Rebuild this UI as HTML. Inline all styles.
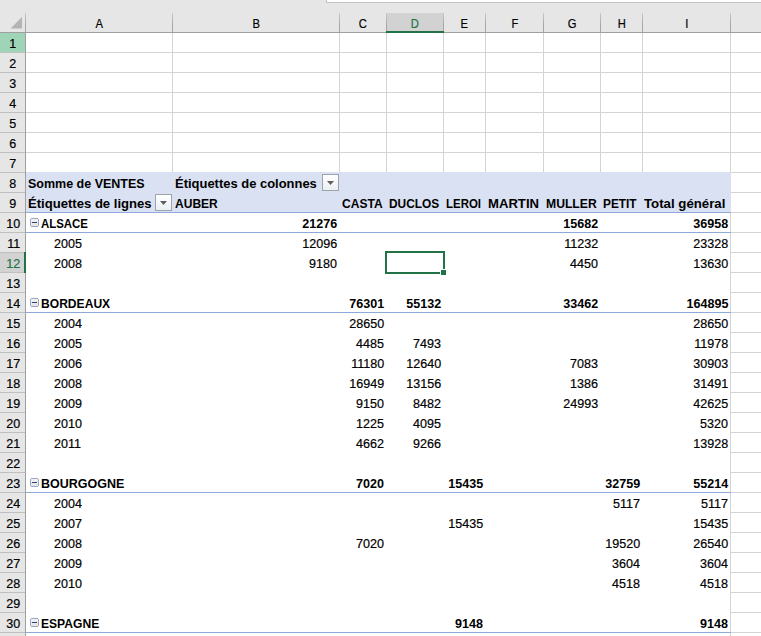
<!DOCTYPE html>
<html><head><meta charset="utf-8"><style>
html,body{margin:0;padding:0;}
body{width:761px;height:636px;position:relative;overflow:hidden;background:#fff;font-family:"Liberation Sans",sans-serif;font-size:13px;}
body>div,body>svg,body>span{position:absolute;box-sizing:content-box;}
.t{line-height:15px;white-space:pre;color:#000;-webkit-text-stroke:0.2px currentColor;}
.b{font-weight:bold;-webkit-text-stroke:0;}
</style></head><body>
<div style="left:0px;top:0px;width:761px;height:32px;background:#e6e6e6;"></div>
<div style="left:326px;top:0px;width:435px;height:3px;background:#c4c4c4;"></div>
<div style="left:327px;top:0px;width:434px;height:2px;background:#ffffff;"></div>
<svg style="left:0;top:0" width="26" height="32"><polygon points="22,17 22,28.5 10.5,28.5" fill="#b4b4b4"/></svg>
<div style="left:387px;top:13px;width:56px;height:18px;background:#d2d2d2;"></div>
<div style="left:25px;top:13px;width:1px;height:19px;background:linear-gradient(#c8c8c8,#a8a8a8 60%,#a4a4a4);"></div>
<div style="left:172px;top:13px;width:1px;height:19px;background:linear-gradient(#c8c8c8,#a8a8a8 60%,#a4a4a4);"></div>
<div style="left:339px;top:13px;width:1px;height:19px;background:linear-gradient(#c8c8c8,#a8a8a8 60%,#a4a4a4);"></div>
<div style="left:386px;top:13px;width:1px;height:19px;background:linear-gradient(#c8c8c8,#a8a8a8 60%,#a4a4a4);"></div>
<div style="left:443px;top:13px;width:1px;height:19px;background:linear-gradient(#c8c8c8,#a8a8a8 60%,#a4a4a4);"></div>
<div style="left:485px;top:13px;width:1px;height:19px;background:linear-gradient(#c8c8c8,#a8a8a8 60%,#a4a4a4);"></div>
<div style="left:543px;top:13px;width:1px;height:19px;background:linear-gradient(#c8c8c8,#a8a8a8 60%,#a4a4a4);"></div>
<div style="left:600px;top:13px;width:1px;height:19px;background:linear-gradient(#c8c8c8,#a8a8a8 60%,#a4a4a4);"></div>
<div style="left:642px;top:13px;width:1px;height:19px;background:linear-gradient(#c8c8c8,#a8a8a8 60%,#a4a4a4);"></div>
<div style="left:730px;top:13px;width:1px;height:19px;background:linear-gradient(#c8c8c8,#a8a8a8 60%,#a4a4a4);"></div>
<div style="left:0px;top:32px;width:761px;height:1px;background:#9f9f9f;"></div>
<div style="left:386px;top:31px;width:58px;height:2px;background:#217346;"></div>
<div style="left:0px;top:33px;width:25px;height:603px;background:#e6e6e6;"></div>
<div style="left:0px;top:33px;width:25px;height:19px;background:#9fd5b7;"></div>
<div style="left:0px;top:253px;width:24px;height:19px;background:#d2d2d2;"></div>
<div style="left:0px;top:52px;width:25px;height:1px;background:#bfbfbf;"></div>
<div style="left:0px;top:72px;width:25px;height:1px;background:#bfbfbf;"></div>
<div style="left:0px;top:92px;width:25px;height:1px;background:#bfbfbf;"></div>
<div style="left:0px;top:112px;width:25px;height:1px;background:#bfbfbf;"></div>
<div style="left:0px;top:132px;width:25px;height:1px;background:#bfbfbf;"></div>
<div style="left:0px;top:152px;width:25px;height:1px;background:#bfbfbf;"></div>
<div style="left:0px;top:172px;width:25px;height:1px;background:#bfbfbf;"></div>
<div style="left:0px;top:192px;width:25px;height:1px;background:#bfbfbf;"></div>
<div style="left:0px;top:212px;width:25px;height:1px;background:#bfbfbf;"></div>
<div style="left:0px;top:232px;width:25px;height:1px;background:#bfbfbf;"></div>
<div style="left:0px;top:252px;width:25px;height:1px;background:#bfbfbf;"></div>
<div style="left:0px;top:272px;width:25px;height:1px;background:#bfbfbf;"></div>
<div style="left:0px;top:292px;width:25px;height:1px;background:#bfbfbf;"></div>
<div style="left:0px;top:312px;width:25px;height:1px;background:#bfbfbf;"></div>
<div style="left:0px;top:332px;width:25px;height:1px;background:#bfbfbf;"></div>
<div style="left:0px;top:352px;width:25px;height:1px;background:#bfbfbf;"></div>
<div style="left:0px;top:372px;width:25px;height:1px;background:#bfbfbf;"></div>
<div style="left:0px;top:392px;width:25px;height:1px;background:#bfbfbf;"></div>
<div style="left:0px;top:412px;width:25px;height:1px;background:#bfbfbf;"></div>
<div style="left:0px;top:432px;width:25px;height:1px;background:#bfbfbf;"></div>
<div style="left:0px;top:452px;width:25px;height:1px;background:#bfbfbf;"></div>
<div style="left:0px;top:472px;width:25px;height:1px;background:#bfbfbf;"></div>
<div style="left:0px;top:492px;width:25px;height:1px;background:#bfbfbf;"></div>
<div style="left:0px;top:512px;width:25px;height:1px;background:#bfbfbf;"></div>
<div style="left:0px;top:532px;width:25px;height:1px;background:#bfbfbf;"></div>
<div style="left:0px;top:552px;width:25px;height:1px;background:#bfbfbf;"></div>
<div style="left:0px;top:572px;width:25px;height:1px;background:#bfbfbf;"></div>
<div style="left:0px;top:592px;width:25px;height:1px;background:#bfbfbf;"></div>
<div style="left:0px;top:612px;width:25px;height:1px;background:#bfbfbf;"></div>
<div style="left:0px;top:632px;width:25px;height:1px;background:#bfbfbf;"></div>
<div style="left:25px;top:32px;width:1px;height:604px;background:#9f9f9f;"></div>
<div style="left:24px;top:252px;width:2px;height:21px;background:#217346;"></div>
<div style="left:172px;top:33px;width:1px;height:139px;background:#d4d4d4;"></div>
<div style="left:339px;top:33px;width:1px;height:139px;background:#d4d4d4;"></div>
<div style="left:386px;top:33px;width:1px;height:139px;background:#d4d4d4;"></div>
<div style="left:443px;top:33px;width:1px;height:139px;background:#d4d4d4;"></div>
<div style="left:485px;top:33px;width:1px;height:139px;background:#d4d4d4;"></div>
<div style="left:543px;top:33px;width:1px;height:139px;background:#d4d4d4;"></div>
<div style="left:600px;top:33px;width:1px;height:139px;background:#d4d4d4;"></div>
<div style="left:642px;top:33px;width:1px;height:139px;background:#d4d4d4;"></div>
<div style="left:730px;top:33px;width:1px;height:139px;background:#d4d4d4;"></div>
<div style="left:26px;top:52px;width:735px;height:1px;background:#d4d4d4;"></div>
<div style="left:26px;top:72px;width:735px;height:1px;background:#d4d4d4;"></div>
<div style="left:26px;top:92px;width:735px;height:1px;background:#d4d4d4;"></div>
<div style="left:26px;top:112px;width:735px;height:1px;background:#d4d4d4;"></div>
<div style="left:26px;top:132px;width:735px;height:1px;background:#d4d4d4;"></div>
<div style="left:26px;top:152px;width:735px;height:1px;background:#d4d4d4;"></div>
<div style="left:26px;top:172px;width:735px;height:1px;background:#d4d4d4;"></div>
<div style="left:730px;top:33px;width:1px;height:603px;background:#d4d4d4;"></div>
<div style="left:731px;top:192px;width:30px;height:1px;background:#d4d4d4;"></div>
<div style="left:731px;top:212px;width:30px;height:1px;background:#d4d4d4;"></div>
<div style="left:731px;top:232px;width:30px;height:1px;background:#d4d4d4;"></div>
<div style="left:731px;top:252px;width:30px;height:1px;background:#d4d4d4;"></div>
<div style="left:731px;top:272px;width:30px;height:1px;background:#d4d4d4;"></div>
<div style="left:731px;top:292px;width:30px;height:1px;background:#d4d4d4;"></div>
<div style="left:731px;top:312px;width:30px;height:1px;background:#d4d4d4;"></div>
<div style="left:731px;top:332px;width:30px;height:1px;background:#d4d4d4;"></div>
<div style="left:731px;top:352px;width:30px;height:1px;background:#d4d4d4;"></div>
<div style="left:731px;top:372px;width:30px;height:1px;background:#d4d4d4;"></div>
<div style="left:731px;top:392px;width:30px;height:1px;background:#d4d4d4;"></div>
<div style="left:731px;top:412px;width:30px;height:1px;background:#d4d4d4;"></div>
<div style="left:731px;top:432px;width:30px;height:1px;background:#d4d4d4;"></div>
<div style="left:731px;top:452px;width:30px;height:1px;background:#d4d4d4;"></div>
<div style="left:731px;top:472px;width:30px;height:1px;background:#d4d4d4;"></div>
<div style="left:731px;top:492px;width:30px;height:1px;background:#d4d4d4;"></div>
<div style="left:731px;top:512px;width:30px;height:1px;background:#d4d4d4;"></div>
<div style="left:731px;top:532px;width:30px;height:1px;background:#d4d4d4;"></div>
<div style="left:731px;top:552px;width:30px;height:1px;background:#d4d4d4;"></div>
<div style="left:731px;top:572px;width:30px;height:1px;background:#d4d4d4;"></div>
<div style="left:731px;top:592px;width:30px;height:1px;background:#d4d4d4;"></div>
<div style="left:731px;top:612px;width:30px;height:1px;background:#d4d4d4;"></div>
<div style="left:731px;top:632px;width:30px;height:1px;background:#d4d4d4;"></div>
<div style="left:26px;top:172px;width:705px;height:40px;background:#d9e1f2;"></div>
<div style="left:26px;top:212px;width:705px;height:1px;background:#8ea9db;"></div>
<div style="left:26px;top:232px;width:705px;height:1px;background:#8ea9db;"></div>
<div style="left:26px;top:312px;width:705px;height:1px;background:#8ea9db;"></div>
<div style="left:26px;top:492px;width:705px;height:1px;background:#8ea9db;"></div>
<div style="left:26px;top:632px;width:705px;height:1px;background:#8ea9db;"></div>
<div style="left:322px;top:174px;width:15px;height:15px;border:1px solid #9da3ab;background:linear-gradient(#ffffff,#eceff3)"></div>
<svg style="left:322px;top:174px" width="17" height="17"><polygon points="5,7 12,7 8.5,11" fill="#5f5f5f"/></svg>
<div style="left:155px;top:194px;width:15px;height:15px;border:1px solid #9da3ab;background:linear-gradient(#ffffff,#eceff3)"></div>
<svg style="left:155px;top:194px" width="17" height="17"><polygon points="5,7 12,7 8.5,11" fill="#5f5f5f"/></svg>
<div style="left:31px;top:219px;width:7px;height:7px;background:linear-gradient(#f2f2f2,#e4e4e4);"></div>
<div style="left:31px;top:218px;width:7px;height:1px;background:#9aa8c8;"></div>
<div style="left:31px;top:226px;width:7px;height:1px;background:#9aa8c8;"></div>
<div style="left:30px;top:219px;width:1px;height:7px;background:#9aa8c8;"></div>
<div style="left:38px;top:219px;width:1px;height:7px;background:#9aa8c8;"></div>
<div style="left:32px;top:222px;width:5px;height:1px;background:#34427a;"></div>
<div style="left:31px;top:299px;width:7px;height:7px;background:linear-gradient(#f2f2f2,#e4e4e4);"></div>
<div style="left:31px;top:298px;width:7px;height:1px;background:#9aa8c8;"></div>
<div style="left:31px;top:306px;width:7px;height:1px;background:#9aa8c8;"></div>
<div style="left:30px;top:299px;width:1px;height:7px;background:#9aa8c8;"></div>
<div style="left:38px;top:299px;width:1px;height:7px;background:#9aa8c8;"></div>
<div style="left:32px;top:302px;width:5px;height:1px;background:#34427a;"></div>
<div style="left:31px;top:479px;width:7px;height:7px;background:linear-gradient(#f2f2f2,#e4e4e4);"></div>
<div style="left:31px;top:478px;width:7px;height:1px;background:#9aa8c8;"></div>
<div style="left:31px;top:486px;width:7px;height:1px;background:#9aa8c8;"></div>
<div style="left:30px;top:479px;width:1px;height:7px;background:#9aa8c8;"></div>
<div style="left:38px;top:479px;width:1px;height:7px;background:#9aa8c8;"></div>
<div style="left:32px;top:482px;width:5px;height:1px;background:#34427a;"></div>
<div style="left:31px;top:619px;width:7px;height:7px;background:linear-gradient(#f2f2f2,#e4e4e4);"></div>
<div style="left:31px;top:618px;width:7px;height:1px;background:#9aa8c8;"></div>
<div style="left:31px;top:626px;width:7px;height:1px;background:#9aa8c8;"></div>
<div style="left:30px;top:619px;width:1px;height:7px;background:#9aa8c8;"></div>
<div style="left:38px;top:619px;width:1px;height:7px;background:#9aa8c8;"></div>
<div style="left:32px;top:622px;width:5px;height:1px;background:#34427a;"></div>
<div style="left:385px;top:251px;width:60px;height:2px;background:#217346;"></div>
<div style="left:385px;top:251px;width:2px;height:23px;background:#217346;"></div>
<div style="left:443px;top:251px;width:2px;height:18px;background:#217346;"></div>
<div style="left:385px;top:272px;width:55px;height:2px;background:#217346;"></div>
<div style="left:441px;top:270px;width:5px;height:5px;background:#217346;"></div>
<div style="left:440px;top:269px;width:1px;height:6px;background:#fff;"></div>
<div style="left:440px;top:269px;width:6px;height:1px;background:#fff;"></div>
<div style="left:441px;top:270px;width:5px;height:5px;background:#217346;"></div>
<span class="t" style="top:16px;left:94.66px;width:8.67px;transform:scaleX(0.86);transform-origin:50% 0;">A</span>
<span class="t" style="top:16px;left:251.66px;width:8.67px;transform:scaleX(0.86);transform-origin:50% 0;">B</span>
<span class="t" style="top:16px;left:358.30px;width:9.39px;transform:scaleX(0.86);transform-origin:50% 0;">C</span>
<span class="t" style="top:16px;color:#217346;left:410.30px;width:9.39px;transform:scaleX(0.86);transform-origin:50% 0;">D</span>
<span class="t" style="top:16px;left:460.16px;width:8.67px;transform:scaleX(0.86);transform-origin:50% 0;">E</span>
<span class="t" style="top:16px;left:510.52px;width:7.95px;transform:scaleX(0.86);transform-origin:50% 0;">F</span>
<span class="t" style="top:16px;left:566.94px;width:10.12px;transform:scaleX(0.86);transform-origin:50% 0;">G</span>
<span class="t" style="top:16px;left:616.80px;width:9.39px;transform:scaleX(0.86);transform-origin:50% 0;">H</span>
<span class="t" style="top:16px;left:684.69px;width:3.62px;transform:scaleX(0.86);transform-origin:50% 0;">I</span>
<span class="t" style="top:36px;left:8.88px;width:7.23px;transform:scaleX(0.965);transform-origin:50% 0;">1</span>
<span class="t" style="top:56px;left:8.88px;width:7.23px;transform:scaleX(0.965);transform-origin:50% 0;">2</span>
<span class="t" style="top:76px;left:8.88px;width:7.23px;transform:scaleX(0.965);transform-origin:50% 0;">3</span>
<span class="t" style="top:96px;left:8.88px;width:7.23px;transform:scaleX(0.965);transform-origin:50% 0;">4</span>
<span class="t" style="top:116px;left:8.88px;width:7.23px;transform:scaleX(0.965);transform-origin:50% 0;">5</span>
<span class="t" style="top:136px;left:8.88px;width:7.23px;transform:scaleX(0.965);transform-origin:50% 0;">6</span>
<span class="t" style="top:156px;left:8.88px;width:7.23px;transform:scaleX(0.965);transform-origin:50% 0;">7</span>
<span class="t" style="top:176px;left:8.88px;width:7.23px;transform:scaleX(0.965);transform-origin:50% 0;">8</span>
<span class="t" style="top:196px;left:8.88px;width:7.23px;transform:scaleX(0.965);transform-origin:50% 0;">9</span>
<span class="t" style="top:216px;left:6.07px;width:14.47px;transform:scaleX(0.965);transform-origin:50% 0;">10</span>
<span class="t" style="top:236px;left:6.55px;width:13.50px;transform:scaleX(0.965);transform-origin:50% 0;">11</span>
<span class="t" style="top:256px;color:#217346;left:6.07px;width:14.47px;transform:scaleX(0.965);transform-origin:50% 0;">12</span>
<span class="t" style="top:276px;left:6.07px;width:14.47px;transform:scaleX(0.965);transform-origin:50% 0;">13</span>
<span class="t" style="top:296px;left:6.07px;width:14.47px;transform:scaleX(0.965);transform-origin:50% 0;">14</span>
<span class="t" style="top:316px;left:6.07px;width:14.47px;transform:scaleX(0.965);transform-origin:50% 0;">15</span>
<span class="t" style="top:336px;left:6.07px;width:14.47px;transform:scaleX(0.965);transform-origin:50% 0;">16</span>
<span class="t" style="top:356px;left:6.07px;width:14.47px;transform:scaleX(0.965);transform-origin:50% 0;">17</span>
<span class="t" style="top:376px;left:6.07px;width:14.47px;transform:scaleX(0.965);transform-origin:50% 0;">18</span>
<span class="t" style="top:396px;left:6.07px;width:14.47px;transform:scaleX(0.965);transform-origin:50% 0;">19</span>
<span class="t" style="top:416px;left:6.07px;width:14.47px;transform:scaleX(0.965);transform-origin:50% 0;">20</span>
<span class="t" style="top:436px;left:6.07px;width:14.47px;transform:scaleX(0.965);transform-origin:50% 0;">21</span>
<span class="t" style="top:456px;left:6.07px;width:14.47px;transform:scaleX(0.965);transform-origin:50% 0;">22</span>
<span class="t" style="top:476px;left:6.07px;width:14.47px;transform:scaleX(0.965);transform-origin:50% 0;">23</span>
<span class="t" style="top:496px;left:6.07px;width:14.47px;transform:scaleX(0.965);transform-origin:50% 0;">24</span>
<span class="t" style="top:516px;left:6.07px;width:14.47px;transform:scaleX(0.965);transform-origin:50% 0;">25</span>
<span class="t" style="top:536px;left:6.07px;width:14.47px;transform:scaleX(0.965);transform-origin:50% 0;">26</span>
<span class="t" style="top:556px;left:6.07px;width:14.47px;transform:scaleX(0.965);transform-origin:50% 0;">27</span>
<span class="t" style="top:576px;left:6.07px;width:14.47px;transform:scaleX(0.965);transform-origin:50% 0;">28</span>
<span class="t" style="top:596px;left:6.07px;width:14.47px;transform:scaleX(0.965);transform-origin:50% 0;">29</span>
<span class="t" style="top:616px;left:6.07px;width:14.47px;transform:scaleX(0.965);transform-origin:50% 0;">30</span>
<span class="t b" style="top:176px;left:27.50px;transform:scaleX(0.9607);transform-origin:0 0;">Somme de VENTES</span>
<span class="t b" style="top:176px;left:174.80px;transform:scaleX(0.9964);transform-origin:0 0;">Étiquettes de colonnes</span>
<span class="t b" style="top:196px;left:27.50px;transform:scaleX(1.0064);transform-origin:0 0;">Étiquettes de lignes</span>
<span class="t b" style="top:196px;left:174.60px;transform:scaleX(0.9257);transform-origin:0 0;">AUBER</span>
<span class="t b" style="top:196px;left:341.80px;transform:scaleX(0.9267);transform-origin:0 0;">CASTA</span>
<span class="t b" style="top:196px;left:389.00px;transform:scaleX(0.9145);transform-origin:0 0;">DUCLOS</span>
<span class="t b" style="top:196px;left:445.70px;transform:scaleX(0.8808);transform-origin:0 0;">LEROI</span>
<span class="t b" style="top:196px;left:487.80px;transform:scaleX(1.0090);transform-origin:0 0;">MARTIN</span>
<span class="t b" style="top:196px;left:545.80px;transform:scaleX(0.9359);transform-origin:0 0;">MULLER</span>
<span class="t b" style="top:196px;left:603.10px;transform:scaleX(0.9092);transform-origin:0 0;">PETIT</span>
<span class="t b" style="top:196px;left:644.30px;transform:scaleX(1.0181);transform-origin:0 0;">Total général</span>
<span class="t b" style="top:216px;left:41.10px;transform:scaleX(0.8793);transform-origin:0 0;">ALSACE</span>
<span class="t b" style="top:216px;left:300.74px;width:36.16px;transform:scaleX(0.965);transform-origin:100% 0;">21276</span>
<span class="t b" style="top:216px;left:561.74px;width:36.16px;transform:scaleX(0.965);transform-origin:100% 0;">15682</span>
<span class="t b" style="top:216px;left:691.74px;width:36.16px;transform:scaleX(0.965);transform-origin:100% 0;">36958</span>
<span class="t" style="top:236px;left:54.00px;transform:scaleX(0.965);transform-origin:0 0;">2005</span>
<span class="t" style="top:236px;left:300.74px;width:36.16px;transform:scaleX(0.965);transform-origin:100% 0;">12096</span>
<span class="t" style="top:236px;left:562.71px;width:35.19px;transform:scaleX(0.965);transform-origin:100% 0;">11232</span>
<span class="t" style="top:236px;left:691.74px;width:36.16px;transform:scaleX(0.965);transform-origin:100% 0;">23328</span>
<span class="t" style="top:256px;left:54.00px;transform:scaleX(0.965);transform-origin:0 0;">2008</span>
<span class="t" style="top:256px;left:307.98px;width:28.92px;transform:scaleX(0.965);transform-origin:100% 0;">9180</span>
<span class="t" style="top:256px;left:568.98px;width:28.92px;transform:scaleX(0.965);transform-origin:100% 0;">4450</span>
<span class="t" style="top:256px;left:691.74px;width:36.16px;transform:scaleX(0.965);transform-origin:100% 0;">13630</span>
<span class="t b" style="top:296px;left:41.10px;transform:scaleX(0.9300);transform-origin:0 0;">BORDEAUX</span>
<span class="t b" style="top:296px;left:347.74px;width:36.16px;transform:scaleX(0.965);transform-origin:100% 0;">76301</span>
<span class="t b" style="top:296px;left:404.74px;width:36.16px;transform:scaleX(0.965);transform-origin:100% 0;">55132</span>
<span class="t b" style="top:296px;left:561.74px;width:36.16px;transform:scaleX(0.965);transform-origin:100% 0;">33462</span>
<span class="t b" style="top:296px;left:684.51px;width:43.39px;transform:scaleX(0.965);transform-origin:100% 0;">164895</span>
<span class="t" style="top:316px;left:54.00px;transform:scaleX(0.965);transform-origin:0 0;">2004</span>
<span class="t" style="top:316px;left:347.74px;width:36.16px;transform:scaleX(0.965);transform-origin:100% 0;">28650</span>
<span class="t" style="top:316px;left:691.74px;width:36.16px;transform:scaleX(0.965);transform-origin:100% 0;">28650</span>
<span class="t" style="top:336px;left:54.00px;transform:scaleX(0.965);transform-origin:0 0;">2005</span>
<span class="t" style="top:336px;left:354.98px;width:28.92px;transform:scaleX(0.965);transform-origin:100% 0;">4485</span>
<span class="t" style="top:336px;left:411.98px;width:28.92px;transform:scaleX(0.965);transform-origin:100% 0;">7493</span>
<span class="t" style="top:336px;left:692.71px;width:35.19px;transform:scaleX(0.965);transform-origin:100% 0;">11978</span>
<span class="t" style="top:356px;left:54.00px;transform:scaleX(0.965);transform-origin:0 0;">2006</span>
<span class="t" style="top:356px;left:349.67px;width:34.23px;transform:scaleX(0.965);transform-origin:100% 0;">11180</span>
<span class="t" style="top:356px;left:404.74px;width:36.16px;transform:scaleX(0.965);transform-origin:100% 0;">12640</span>
<span class="t" style="top:356px;left:568.98px;width:28.92px;transform:scaleX(0.965);transform-origin:100% 0;">7083</span>
<span class="t" style="top:356px;left:691.74px;width:36.16px;transform:scaleX(0.965);transform-origin:100% 0;">30903</span>
<span class="t" style="top:376px;left:54.00px;transform:scaleX(0.965);transform-origin:0 0;">2008</span>
<span class="t" style="top:376px;left:347.74px;width:36.16px;transform:scaleX(0.965);transform-origin:100% 0;">16949</span>
<span class="t" style="top:376px;left:404.74px;width:36.16px;transform:scaleX(0.965);transform-origin:100% 0;">13156</span>
<span class="t" style="top:376px;left:568.98px;width:28.92px;transform:scaleX(0.965);transform-origin:100% 0;">1386</span>
<span class="t" style="top:376px;left:691.74px;width:36.16px;transform:scaleX(0.965);transform-origin:100% 0;">31491</span>
<span class="t" style="top:396px;left:54.00px;transform:scaleX(0.965);transform-origin:0 0;">2009</span>
<span class="t" style="top:396px;left:354.98px;width:28.92px;transform:scaleX(0.965);transform-origin:100% 0;">9150</span>
<span class="t" style="top:396px;left:411.98px;width:28.92px;transform:scaleX(0.965);transform-origin:100% 0;">8482</span>
<span class="t" style="top:396px;left:561.74px;width:36.16px;transform:scaleX(0.965);transform-origin:100% 0;">24993</span>
<span class="t" style="top:396px;left:691.74px;width:36.16px;transform:scaleX(0.965);transform-origin:100% 0;">42625</span>
<span class="t" style="top:416px;left:54.00px;transform:scaleX(0.965);transform-origin:0 0;">2010</span>
<span class="t" style="top:416px;left:354.98px;width:28.92px;transform:scaleX(0.965);transform-origin:100% 0;">1225</span>
<span class="t" style="top:416px;left:411.98px;width:28.92px;transform:scaleX(0.965);transform-origin:100% 0;">4095</span>
<span class="t" style="top:416px;left:698.98px;width:28.92px;transform:scaleX(0.965);transform-origin:100% 0;">5320</span>
<span class="t" style="top:436px;left:54.00px;transform:scaleX(0.965);transform-origin:0 0;">2011</span>
<span class="t" style="top:436px;left:354.98px;width:28.92px;transform:scaleX(0.965);transform-origin:100% 0;">4662</span>
<span class="t" style="top:436px;left:411.98px;width:28.92px;transform:scaleX(0.965);transform-origin:100% 0;">9266</span>
<span class="t" style="top:436px;left:691.74px;width:36.16px;transform:scaleX(0.965);transform-origin:100% 0;">13928</span>
<span class="t b" style="top:476px;left:41.10px;transform:scaleX(0.9622);transform-origin:0 0;">BOURGOGNE</span>
<span class="t b" style="top:476px;left:354.98px;width:28.92px;transform:scaleX(0.965);transform-origin:100% 0;">7020</span>
<span class="t b" style="top:476px;left:446.74px;width:36.16px;transform:scaleX(0.965);transform-origin:100% 0;">15435</span>
<span class="t b" style="top:476px;left:603.74px;width:36.16px;transform:scaleX(0.965);transform-origin:100% 0;">32759</span>
<span class="t b" style="top:476px;left:691.74px;width:36.16px;transform:scaleX(0.965);transform-origin:100% 0;">55214</span>
<span class="t" style="top:496px;left:54.00px;transform:scaleX(0.965);transform-origin:0 0;">2004</span>
<span class="t" style="top:496px;left:611.93px;width:27.97px;transform:scaleX(0.965);transform-origin:100% 0;">5117</span>
<span class="t" style="top:496px;left:699.93px;width:27.97px;transform:scaleX(0.965);transform-origin:100% 0;">5117</span>
<span class="t" style="top:516px;left:54.00px;transform:scaleX(0.965);transform-origin:0 0;">2007</span>
<span class="t" style="top:516px;left:446.74px;width:36.16px;transform:scaleX(0.965);transform-origin:100% 0;">15435</span>
<span class="t" style="top:516px;left:691.74px;width:36.16px;transform:scaleX(0.965);transform-origin:100% 0;">15435</span>
<span class="t" style="top:536px;left:54.00px;transform:scaleX(0.965);transform-origin:0 0;">2008</span>
<span class="t" style="top:536px;left:354.98px;width:28.92px;transform:scaleX(0.965);transform-origin:100% 0;">7020</span>
<span class="t" style="top:536px;left:603.74px;width:36.16px;transform:scaleX(0.965);transform-origin:100% 0;">19520</span>
<span class="t" style="top:536px;left:691.74px;width:36.16px;transform:scaleX(0.965);transform-origin:100% 0;">26540</span>
<span class="t" style="top:556px;left:54.00px;transform:scaleX(0.965);transform-origin:0 0;">2009</span>
<span class="t" style="top:556px;left:610.98px;width:28.92px;transform:scaleX(0.965);transform-origin:100% 0;">3604</span>
<span class="t" style="top:556px;left:698.98px;width:28.92px;transform:scaleX(0.965);transform-origin:100% 0;">3604</span>
<span class="t" style="top:576px;left:54.00px;transform:scaleX(0.965);transform-origin:0 0;">2010</span>
<span class="t" style="top:576px;left:610.98px;width:28.92px;transform:scaleX(0.965);transform-origin:100% 0;">4518</span>
<span class="t" style="top:576px;left:698.98px;width:28.92px;transform:scaleX(0.965);transform-origin:100% 0;">4518</span>
<span class="t b" style="top:616px;left:41.10px;transform:scaleX(0.9296);transform-origin:0 0;">ESPAGNE</span>
<span class="t b" style="top:616px;left:453.98px;width:28.92px;transform:scaleX(0.965);transform-origin:100% 0;">9148</span>
<span class="t b" style="top:616px;left:698.98px;width:28.92px;transform:scaleX(0.965);transform-origin:100% 0;">9148</span>
</body></html>
